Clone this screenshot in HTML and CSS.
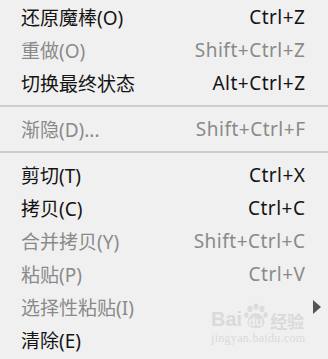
FILE: index.html
```html
<!DOCTYPE html>
<html lang="zh-CN">
<head>
    <meta charset="UTF-8">
    <meta name="viewport" content="width=device-width, initial-scale=1.0">
    <title>编辑菜单</title>
    <link rel="stylesheet" href="styles.css">
</head>
<body>

    <!-- 编辑菜单 -->
    <ul class="menu">
        <li class="menu-item"><span class="label">还原魔棒(O)</span><span class="shortcut">Ctrl+Z</span></li>
        <li class="menu-item disabled"><span class="label">重做(O)</span><span class="shortcut">Shift+Ctrl+Z</span></li>
        <li class="menu-item"><span class="label">切换最终状态</span><span class="shortcut">Alt+Ctrl+Z</span></li>
        <li class="separator"></li>
        <li class="menu-item disabled"><span class="label">渐隐(D)...</span><span class="shortcut">Shift+Ctrl+F</span></li>
        <li class="separator"></li>
        <li class="menu-item"><span class="label">剪切(T)</span><span class="shortcut">Ctrl+X</span></li>
        <li class="menu-item"><span class="label">拷贝(C)</span><span class="shortcut">Ctrl+C</span></li>
        <li class="menu-item disabled"><span class="label">合并拷贝(Y)</span><span class="shortcut">Shift+Ctrl+C</span></li>
        <li class="menu-item disabled"><span class="label">粘贴(P)</span><span class="shortcut">Ctrl+V</span></li>
        <li class="menu-item disabled"><span class="label">选择性粘贴(I)</span><span class="shortcut"></span><span class="arrow"></span></li>
        <li class="menu-item"><span class="label">清除(E)</span><span class="shortcut"></span></li>
    </ul>

    <!-- 水印 -->
    <div class="watermark">
        <div class="wm-logo">
            <span class="wm-bai">Bai</span>
            <span class="wm-paw">
                <svg width="26" height="26" viewBox="0 0 26 26">
                    <ellipse cx="7" cy="6" rx="2.6" ry="3.2" fill="#dcdcdc"/>
                    <ellipse cx="13" cy="3.6" rx="2.6" ry="3.2" fill="#dcdcdc"/>
                    <ellipse cx="19" cy="6" rx="2.6" ry="3.2" fill="#dcdcdc"/>
                    <ellipse cx="3.4" cy="12" rx="2.2" ry="2.8" fill="#dcdcdc"/>
                    <ellipse cx="22.6" cy="12" rx="2.2" ry="2.8" fill="#dcdcdc"/>
                    <path d="M13 10 C8 10 4 16 4.5 20 C5 24 9 25 13 25 C17 25 21 24 21.5 20 C22 16 18 10 13 10 Z" fill="#dcdcdc"/>
                </svg>
                <span class="wm-du">du</span>
            </span>
            <span class="wm-jy">经验</span>
        </div>
        <div class="wm-url">jingyan.baidu.com</div>
    </div>

</body>
</html>
```

FILE: styles.css
```css
/* ページ全体 */
body {
    margin: 0;
    padding: 0;
    background-color: #f0f0f0;
    font-family: 'Noto Sans', 'Noto Sans CJK SC', sans-serif;
    font-size: 19px;
    color: #141414;
}

/* メニュー */
.menu {
    list-style: none;
    margin: 0;
    padding: 0;
}

.menu-item {
    display: grid;
    grid-template-columns: 1fr auto 23px;
    align-items: center;
    height: 33px;
    padding-left: 21px;
}

.menu-item.disabled {
    color: #8a8a8a;
}

.shortcut {
    text-align: right;
    letter-spacing: 0.5px;
    margin-right: -0.5px;
}

/* サブメニューの矢印 */
.arrow {
    justify-self: end;
    margin-right: 7px;
    width: 0;
    height: 0;
    border-top: 7px solid transparent;
    border-bottom: 7px solid transparent;
    border-left: 8px solid #555555;
}

/* 区切り線 */
.separator {
    height: 2px;
    margin: 6px 0 5px;
    background-color: #cdcdcd;
}

/* 水印 */
.watermark {
    position: absolute;
    left: 211px;
    top: 303px;
    color: #dadada;
    pointer-events: none;
}

.wm-logo {
    display: flex;
    align-items: flex-end;
    gap: 1px;
    font-family: 'Liberation Sans', sans-serif;
    font-weight: bold;
    font-size: 20px;
    line-height: 1;
}

.wm-paw {
    position: relative;
    width: 26px;
    height: 26px;
}

.wm-du {
    position: absolute;
    left: 5px;
    bottom: 1px;
    font-size: 12px;
    color: #f0f0f0;
}

.wm-jy {
    font-family: 'Noto Sans CJK SC', sans-serif;
    font-size: 17px;
}

.wm-url {
    margin-top: 2px;
    font-family: 'Liberation Serif', serif;
    font-size: 12px;
    letter-spacing: 0.3px;
}
```
